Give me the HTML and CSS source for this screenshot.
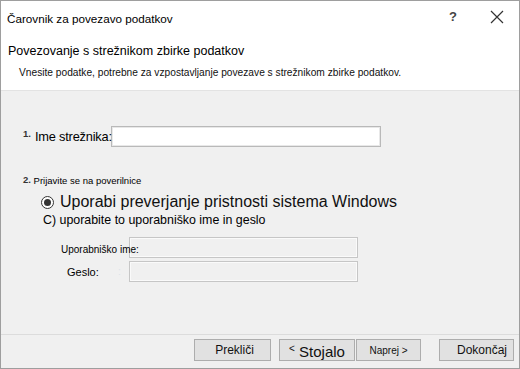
FILE: index.html
```html
<!DOCTYPE html>
<html lang="sl">
<head>
<meta charset="utf-8">
<title>Čarovnik za povezavo podatkov</title>
<link rel="stylesheet" href="styles.css">
</head>
<body>
<div class="window">
  <div class="top">
    <div class="titlebar">
      <span class="title">Čarovnik za povezavo podatkov</span>
      <span class="help">?</span>
      <svg class="close" width="14" height="14" viewBox="0 0 14 14"><path d="M1 1 L13 13 M13 1 L1 13" stroke="#333" stroke-width="1.2" fill="none"/></svg>
    </div>
    <div class="head-title">Povezovanje s strežnikom zbirke podatkov</div>
    <div class="head-desc">Vnesite podatke, potrebne za vzpostavljanje povezave s strežnikom zbirke podatkov.</div>
  </div>
  <div class="content">
    <div class="row-server">
      <span class="num">1.</span>
      <span class="lbl-server">Ime strežnika:</span>
      <span class="input white server"></span>
    </div>
    <div class="step2"><span class="num">2.</span> Prijavite se na poverilnice</div>
    <div class="radio-row">
      <span class="radio"><span class="dot"></span></span>
      <span class="radio-text">Uporabi preverjanje pristnosti sistema Windows</span>
    </div>
    <div class="alt">C) uporabite to uporabniško ime in geslo</div>
    <div class="field user-row">
      <span class="lbl-user">Uporabniško ime:</span>
      <span class="input grey cred"></span>
    </div>
    <div class="field pass-row">
      <span class="lbl-pass">Geslo:</span>
      <span class="faint">:</span>
      <span class="input grey cred"></span>
    </div>
  </div>
  <div class="footer">
    <span class="btn b-cancel">Prekliči</span>
    <span class="btn b-back"><span class="lt">&lt;</span>&nbsp;Stojalo</span>
    <span class="btn b-next">Naprej &gt;</span>
    <span class="btn b-finish">Dokončaj</span>
  </div>
</div>
</body>
</html>
```
FILE: styles.css
```css
html, body {
  margin: 0;
  padding: 0;
  background: #f0f0f0;
}
body {
  font-family: "Liberation Sans", Arial, sans-serif;
  color: #000;
}
.window {
  width: 520px;
  height: 369px;
  box-sizing: border-box;
  border: 1px solid #9e9e9e;
  background: #f0f0f0;
  display: flex;
  flex-direction: column;
}
.top {
  background: #fff;
  height: 89px;
  border-bottom: 1px solid #e3e3e3;
  display: flex;
  flex-direction: column;
}
.titlebar {
  height: 33px;
  display: flex;
  align-items: center;
  padding-left: 6px;
}
.title {
  font-size: 11.7px;
  flex: 1;
  padding-top: 1px;
}
.help {
  font-size: 13px;
  font-weight: bold;
  color: #444;
  margin-right: 33px;
  padding-bottom: 2px;
}
.close {
  margin-right: 15px;
  margin-bottom: 1px;
}
.head-title {
  font-size: 12.5px;
  padding-left: 7px;
  margin-top: 9px;
  line-height: 16px;
}
.head-desc {
  font-size: 10.2px;
  padding-left: 18px;
  margin-top: 7px;
  line-height: 14px;
  color: #111;
}
.content {
  flex: 1;
  display: flex;
  flex-direction: column;
  border-bottom: 1px solid #dcdcdc;
}
.num {
  font-size: 9.5px;
  font-weight: bold;
  color: #333;
  position: relative;
  top: -3px;
}
.row-server {
  display: flex;
  align-items: center;
  margin-top: 35px;
  padding-left: 22px;
  height: 21px;
}
.lbl-server {
  font-size: 12.8px;
  margin-left: 4px;
  width: 76px;
  white-space: nowrap;
  position: relative;
  z-index: 1;
  letter-spacing: -0.2px;
}
.input {
  display: block;
  box-sizing: border-box;
  height: 21px;
  border: 1px solid #b9b9b9;
  box-shadow: inset 0 0 0 1px #e8e8e8;
}
.white {
  background: #fff;
}
.server {
  width: 270px;
}
.step2 {
  font-size: 9.5px;
  padding-left: 22px;
  margin-top: 28px;
  line-height: 12px;
}
.step2 .num {
  top: -1px;
}
.radio-row {
  display: flex;
  align-items: center;
  padding-left: 40px;
  margin-top: 5px;
  height: 20px;
}
.radio {
  width: 11px;
  height: 11px;
  border: 1px solid #333;
  border-radius: 50%;
  background: #fff;
  display: flex;
  align-items: center;
  justify-content: center;
}
.dot {
  width: 7px;
  height: 7px;
  border-radius: 50%;
  background: #333;
}
.radio-text {
  font-size: 16px;
  margin-left: 6px;
  color: #111;
}
.alt {
  font-size: 12.4px;
  padding-left: 42px;
  line-height: 16px;
}
.field {
  display: flex;
  align-items: center;
  height: 21px;
}
.user-row {
  margin-top: 9px;
  padding-left: 60px;
}
.pass-row {
  margin-top: 3px;
  padding-left: 66px;
}
.lbl-user {
  font-size: 10px;
  width: 68px;
  white-space: nowrap;
  position: relative;
  z-index: 1;
  padding-top: 3px;
}
.lbl-pass {
  font-size: 11px;
  width: 51px;
}
.faint {
  color: #dde3ea;
  font-size: 10px;
  width: 11px;
}
.grey {
  background: #f0f0f0;
  border-color: #c6c6c6;
  box-shadow: inset 0 0 0 1px #fafafa;
}
.cred {
  width: 229px;
}
.footer {
  height: 33px;
  display: flex;
  align-items: flex-start;
  padding-top: 4px;
  box-sizing: border-box;
}
.btn {
  height: 22px;
  box-sizing: border-box;
  background: #e1e1e1;
  border: 1px solid #adadad;
  display: flex;
  align-items: center;
  justify-content: center;
  color: #111;
  white-space: nowrap;
}
.b-cancel {
  margin-left: 193px;
  width: 77px;
  font-size: 12px;
  padding-left: 4px;
}
.b-back {
  margin-left: 8px;
  width: 76px;
  font-size: 15px;
  padding-top: 2px;
}
.lt {
  font-size: 10px;
  position: relative;
  top: -3px;
}
.b-next {
  margin-left: 1px;
  width: 65px;
  font-size: 10px;
}
.b-finish {
  margin-left: 18px;
  width: 75px;
  font-size: 12px;
  justify-content: flex-end;
  padding-right: 6px;
}
```
